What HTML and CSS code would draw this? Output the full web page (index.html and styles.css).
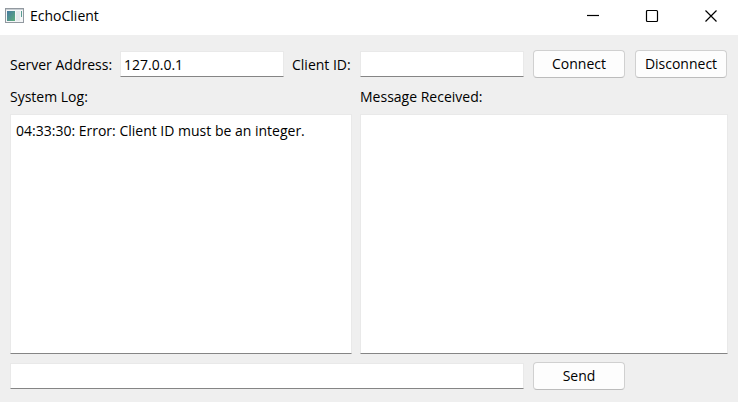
FILE: index.html
```html
<!DOCTYPE html>
<html lang="en">
<head>
<meta charset="utf-8">
<title>EchoClient</title>
<link rel="stylesheet" href="styles.css">
</head>
<body>
<header class="titlebar">
  <svg class="app-icon" width="20" height="16" viewBox="0 0 20 16" aria-hidden="true">
    <defs>
      <linearGradient id="screen" x1="0" y1="0" x2="1" y2="1">
        <stop offset="0" stop-color="#4579a0"/>
        <stop offset="1" stop-color="#5fae7c"/>
      </linearGradient>
    </defs>
    <rect x="0.5" y="0.5" width="18" height="14" fill="#f4f6f7" stroke="#9299a0"/>
    <rect x="1" y="1" width="17" height="1" fill="#c8ced3"/>
    <rect x="2" y="3" width="8" height="10" fill="url(#screen)"/>
    <rect x="11" y="3" width="4" height="10" fill="#e6e9ec"/>
    <rect x="16" y="3" width="1" height="6" fill="#5a9c92"/>
  </svg>
  <h1 class="title">EchoClient</h1>
  <div class="window-buttons">
    <button class="window-button" type="button" aria-label="Minimize">
      <svg width="14" height="14" viewBox="0 0 14 14"><path d="M1 6.500H13" /></svg>
    </button>
    <button class="window-button" type="button" aria-label="Maximize">
      <svg width="14" height="14" viewBox="0 0 14 14"><rect x="1.500" y="1.500" width="11" height="11" rx="1" /></svg>
    </button>
    <button class="window-button" type="button" aria-label="Close">
      <svg width="14" height="14" viewBox="0 0 14 14"><path d="M1.500 1.500L12.500 12.500M12.500 1.500L1.500 12.500" /></svg>
    </button>
  </div>
</header>
<main class="form">
  <label for="server">Server Address:</label>
  <input class="field" id="server" type="text" value="127.0.0.1">
  <label for="client">Client ID:</label>
  <input class="field" id="client" type="text">
  <button class="button" type="button">Connect</button>
  <button class="button" type="button">Disconnect</button>
  <label class="left" for="log">System Log:</label>
  <label class="right" for="messages">Message Received:</label>
  <textarea class="field area left" id="log" readonly>04:33:30: Error: Client ID must be an integer.</textarea>
  <textarea class="field area right" id="messages" readonly></textarea>
  <input class="field message" type="text" aria-label="Message">
  <button class="button" type="button">Send</button>
</main>
</body>
</html>
```
FILE: styles.css
```css
* {
  box-sizing: border-box;
}

body {
  margin: 0;
  min-height: 100vh;
  display: flex;
  flex-direction: column;
  background: #efefef;
  color: #000;
  font: 14px/20px "Segoe UI", "Open Sans", sans-serif;
}

.titlebar {
  display: flex;
  align-items: center;
  height: 35px;
  padding: 0 0 3px 5px;
  background: #fff;
}

.title {
  margin: 0 auto 0 5px;
  font-size: 14px;
  font-weight: 400;
}

.window-buttons {
  display: flex;
  align-self: stretch;
  gap: 5px;
}

.window-button {
  display: flex;
  align-items: center;
  justify-content: center;
  width: 54px;
  padding: 0;
  border: 0;
  background: none;
}

.window-button svg {
  fill: none;
  stroke: #000;
  stroke-width: 1.2;
}

.form {
  flex: 1;
  display: grid;
  grid-template-columns: 102px 1fr 60px 1fr 94px 94px;
  grid-template-rows: 28px 20px 1fr 28px;
  align-items: center;
  gap: 8px;
  padding: 15px 10px 12px;
}

label {
  padding-top: 2px;
  white-space: nowrap;
}

.left {
  grid-column: 1 / 4;
}

.right {
  grid-column: 4 / 7;
}

.message {
  grid-column: 1 / 5;
}

.field {
  width: 100%;
  min-width: 0;
  height: 26px;
  margin: 0;
  padding: 0 3px;
  border: 1px solid #e9e9e9;
  border-bottom-color: #858585;
  outline: 0;
  background: #fff;
  color: inherit;
  font: inherit;
}

.area {
  display: block;
  height: 100%;
  padding: 6px 5px;
  resize: none;
}

.button {
  height: 28px;
  margin: 0 1px;
  padding: 0;
  border: 1px solid #d0d0d0;
  border-bottom-color: #bcbcbc;
  border-radius: 4px;
  background: #fdfdfd;
  color: inherit;
  font: inherit;
}
```
